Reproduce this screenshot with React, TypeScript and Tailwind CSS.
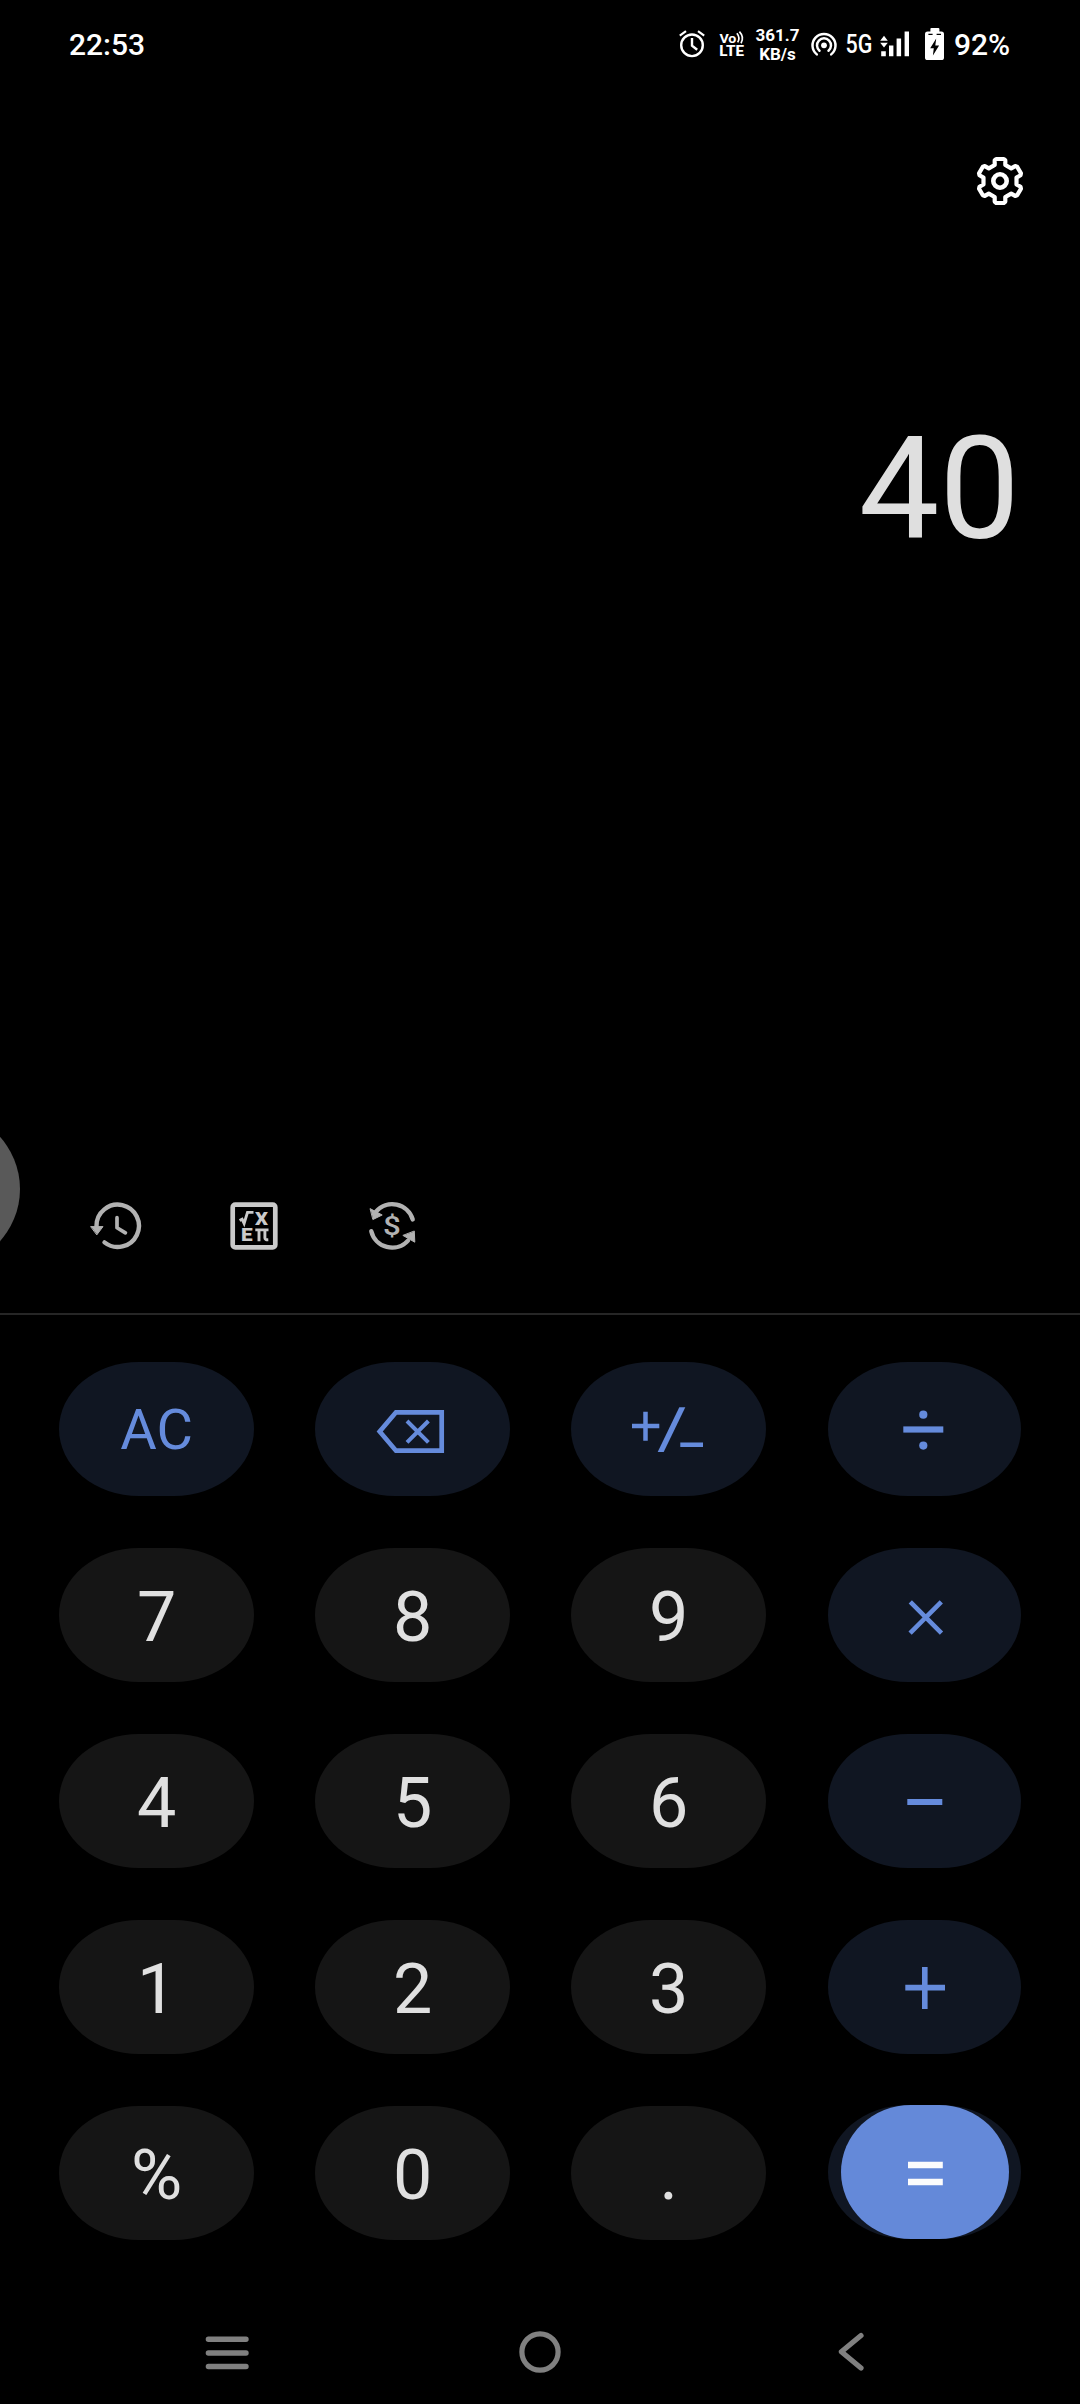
import type { ReactNode } from "react";

const BLUE = "#658bdc";

/* ---------- status bar ---------- */

function StatusBar() {
  return (
    <header className="flex h-[88px] items-start justify-between pl-[69px] pr-[70px] text-white">
      <span className="mt-[27px] text-[30px] leading-[35px] font-medium">22:53</span>
      <div className="flex h-full items-start">
        <svg className="h-[88px] w-[30px]" viewBox="678 0 30 88" fill="none" stroke="currentColor" strokeWidth="2.4">
          <circle cx="692" cy="45.3" r="10.8" />
          <path d="M679.8 35.6 686 31.2M698 31.2 704.2 35.6" strokeWidth="2.2" />
          <path d="M692 38v7.6l5.2 4.2" />
        </svg>
        <svg className="ml-[10px] h-[88px] w-[28px]" viewBox="718 0 28 88" fill="currentColor">
          <text x="719.4" y="42.7" fontSize="13" fontWeight="700" textLength="17" lengthAdjust="spacingAndGlyphs">Vo</text>
          <path d="M736.9 33.2q3.6 4.6 .8 9.2M739.4 31.6q5.2 5.6 1.6 11.6" fill="none" stroke="currentColor" strokeWidth="1.7" />
          <text x="719.3" y="56.4" fontSize="15" fontWeight="800" textLength="24.6" lengthAdjust="spacingAndGlyphs">LTE</text>
        </svg>
        <div className="ml-[8px] mt-[26px] flex w-[47px] flex-col items-center text-[17px] leading-[19px] font-bold">
          <span>361.7</span>
          <span>KB/s</span>
        </div>
        <svg className="ml-[9px] h-[88px] w-[28px]" viewBox="810 0 28 88" fill="none" stroke="currentColor" strokeWidth="2.5" strokeLinecap="round">
          <circle cx="824" cy="45.3" r="2.9" fill="currentColor" stroke="none" />
          <path d="M819.5 50.7A7 7 0 1 1 828.5 50.7" />
          <path d="M816.8 54.4A11.5 11.5 0 1 1 831.2 54.4" />
        </svg>
        <svg className="ml-[5px] h-[88px] w-[34px]" viewBox="843 0 34 88" fill="currentColor">
          <text x="845.6" y="53.3" fontSize="26" fontWeight="500" textLength="26.8" lengthAdjust="spacingAndGlyphs">5G</text>
        </svg>
        <svg className="ml-[2px] h-[88px] w-[32px]" viewBox="879 0 32 88" fill="currentColor">
          <path d="M880.2 40.7h7.6L884 35.8zM880.2 42.7h7.6L884 47.4z" />
          <path d="M881.2 51.3h4.6v5h-4.6zM889 45.6h4.4v10.7H889zM896.6 38.6h4.5v17.7h-4.5zM904.6 31.6h4.4v24.7h-4.4z" />
        </svg>
        <svg className="ml-[13px] h-[88px] w-[22px]" viewBox="924 0 22 88">
          <rect x="930.4" y="28" width="9" height="6" rx="1" fill="#fff" />
          <rect x="925" y="31.5" width="19" height="28.6" rx="2.6" fill="#fff" />
          <path d="M928.4 34.3h4.2M936.6 34.3h4.4" stroke="#000" strokeWidth="1.2" />
          <path d="M936.2 38.6l-6 9.6h3.6l-.9 7.4 6.2-10h-3.8z" fill="#000" />
        </svg>
        <span className="mt-[27px] ml-[8px] w-[56px] text-[30px] leading-[35px] font-medium whitespace-nowrap">92%</span>
      </div>
    </header>
  );
}

/* ---------- settings gear ---------- */

const toothPoints = [
  [-5.3, -16],
  [-5.3, -20.6],
  [-3.8, -22],
  [3.8, -22],
  [5.3, -20.6],
  [5.3, -16],
];
const gearPoints = Array.from({ length: 6 }, (_, k) => {
  const a = (k * Math.PI) / 3;
  return toothPoints.map(([x, y]) => {
    const px = x * Math.cos(a) - y * Math.sin(a);
    const py = x * Math.sin(a) + y * Math.cos(a);
    return `${px.toFixed(2)},${py.toFixed(2)}`;
  });
})
  .flat()
  .join(" ");

function GearIcon() {
  return (
    <svg className="size-[52px]" viewBox="-26 -26 52 52" fill="none" stroke="#fff" strokeLinejoin="round">
      <polygon points={gearPoints} strokeWidth="4.2" />
      <circle r="6.7" strokeWidth="4.6" />
    </svg>
  );
}

/* ---------- tool row ---------- */

function HistoryIcon() {
  return (
    <svg className="size-[56px]" viewBox="88 1198 56 56" fill="none" stroke="#b2b2b2" strokeWidth="4.4" strokeLinecap="round" strokeLinejoin="round">
      <path d="M104.5 1242.4A21.2 21.2 0 1 0 96.5 1226" />
      <path d="M117 1217.7v10l8.4 5.2" strokeWidth="3.7" />
      <path d="M91 1226.6h12l-6 8z" fill="#b2b2b2" strokeWidth="1" />
    </svg>
  );
}

function ScientificIcon() {
  return (
    <svg className="size-[56px]" viewBox="226 1198 56 56" fill="none" stroke="#cacaca">
      <rect x="232.7" y="1204.7" width="42.6" height="42.6" rx="2.6" strokeWidth="4.7" />
      <path d="M239.6 1220.6l2.5-1.4 2 4.2 3.4-11h6" strokeWidth="2.9" />
      <g fill="#cacaca" stroke="none" fontWeight="900">
        <text x="255.1" y="1225" fontSize="19" textLength="13" lengthAdjust="spacingAndGlyphs">X</text>
        <text x="241.1" y="1241.4" fontSize="18" textLength="11.6" lengthAdjust="spacingAndGlyphs">E</text>
      </g>
      <path d="M255.3 1229.9h13.2M259 1230v11.2M264.9 1230v8q0 2 3.4 1.8" strokeWidth="2.9" />
    </svg>
  );
}

function CurrencyIcon() {
  return (
    <svg className="size-[56px]" viewBox="364 1198 56 56" fill="none" stroke="#b2b2b2" strokeWidth="4.4" strokeLinecap="round">
      <path d="M412.7 1219.4A21.4 21.4 0 0 0 376 1211.6" />
      <path d="M371.3 1231.2A21.4 21.4 0 0 0 408 1240.6" />
      <path d="M370.4 1208.8l11.8 6.2-9 4.4zM414.3 1231.4l.5 10.8-11.6-6.6z" fill="#b2b2b2" strokeWidth="1" strokeLinejoin="round" />
      <text x="383.1" y="1234.7" fontSize="25" fontWeight="500" fill="#b2b2b2" stroke="none" textLength="17.8" lengthAdjust="spacingAndGlyphs">$</text>
    </svg>
  );
}

/* ---------- keypad ---------- */

function Key({ blue, last, children }: { blue?: boolean; last?: boolean; children: ReactNode }) {
  return (
    <button
      className={
        "flex h-[134px] items-center justify-center rounded-[80px/67px] text-[70px] leading-none " +
        (last ? "ml-[0.7px] w-[193.3px] " : "w-[195.3px] ") +
        (blue ? "bg-[#101622] text-[#658bdc]" : "bg-[#151515] pt-[3px] text-[#e0e0e0]")
      }
    >
      {children}
    </button>
  );
}

function BackspaceIcon() {
  return (
    <svg className="h-[134px] w-[195px]" viewBox="315 1362 195 134" fill="none" stroke={BLUE}>
      <path d="M379.7 1431.6 396 1412.3h45.7v38.4H396z" strokeWidth="4.7" />
      <path d="M407 1421l21.4 21.4M428.4 1421 407 1442.4" strokeWidth="4" />
    </svg>
  );
}

function SignIcon() {
  return (
    <svg className="h-[134px] w-[195px]" viewBox="571 1362 195 134" stroke={BLUE}>
      <path d="M632 1426h27.3M645.5 1411.7v29M680.3 1444.7H703" strokeWidth="4.5" />
      <path d="M679.3 1407.3h6L663.7 1452h-6z" fill={BLUE} stroke="none" />
    </svg>
  );
}

function DivideIcon() {
  return (
    <svg className="h-[134px] w-[193px]" viewBox="827.7 1362 193 134" fill={BLUE}>
      <rect x="903" y="1426.4" width="40" height="6.2" />
      <circle cx="923" cy="1414.7" r="4.1" />
      <circle cx="923" cy="1445.6" r="4.1" />
    </svg>
  );
}

function TimesIcon() {
  return (
    <svg className="-mt-[3px] h-[134px] w-[193px] translate-y-[1.5px]" viewBox="827.7 1548 193 134" stroke={BLUE} strokeWidth="4.6">
      <path d="M910 1601.3l31.2 31.4M941 1601.3l-31.2 31.4" />
    </svg>
  );
}

function MinusIcon() {
  return (
    <svg className="h-[134px] w-[193px]" viewBox="827.7 1734 193 134" stroke={BLUE} strokeWidth="6">
      <path d="M907 1802h35" />
    </svg>
  );
}

function PlusIcon() {
  return (
    <svg className="h-[134px] w-[193px]" viewBox="827.7 1920 193 134" stroke={BLUE} strokeWidth="5.6">
      <path d="M905 1987.6h39.7M924.5 1967v42" />
    </svg>
  );
}

function EqualsKey() {
  return (
    <button className="-mt-px ml-[0.7px] flex h-[134px] w-[193.3px] items-center justify-center rounded-[80px/67px] bg-[#101622]">
      <span className="ml-[1px] flex h-full w-[168px] items-center justify-center rounded-[70px/67px] bg-[#6489d9]">
        <svg className="h-[134px] w-[168px]" viewBox="841 2105 168 134" stroke="#fcfcfc" strokeWidth="6.4">
          <path d="M908 2165h34.8M908 2182h34.8" />
        </svg>
      </span>
    </button>
  );
}

function Keypad() {
  return (
    <section className="grid grid-cols-[195px_195px_195px_194px] gap-x-[61px] gap-y-[52px] pt-[47px] pl-[59px]">
      <Key blue>
        <span className="pt-[1px] text-[56px] leading-none">AC</span>
      </Key>
      <Key blue><BackspaceIcon /></Key>
      <Key blue><SignIcon /></Key>
      <Key blue last><DivideIcon /></Key>
      <Key>7</Key>
      <Key>8</Key>
      <Key>9</Key>
      <Key blue last><TimesIcon /></Key>
      <Key>4</Key>
      <Key>5</Key>
      <Key>6</Key>
      <Key blue last><MinusIcon /></Key>
      <Key>1</Key>
      <Key>2</Key>
      <Key>3</Key>
      <Key blue last><PlusIcon /></Key>
      <Key>%</Key>
      <Key>0</Key>
      <Key>.</Key>
      <EqualsKey />
    </section>
  );
}

/* ---------- navigation bar ---------- */

function NavBar() {
  return (
    <nav className="mt-auto flex h-[104px] items-center justify-between pr-[204px] pl-[203px]">
      <svg className="size-[48px]" viewBox="203.5 2328 48 48" stroke="#808080" strokeWidth="5.4" strokeLinecap="round">
        <path d="M208.9 2339.2h37.6M208.9 2353h37.6M208.9 2366.5h37.6" />
      </svg>
      <svg className="size-[48px]" viewBox="516 2328 48 48" fill="none" stroke="#808080" strokeWidth="5.2">
        <circle cx="540" cy="2352" r="18.1" />
      </svg>
      <svg className="size-[48px]" viewBox="828 2328 48 48" fill="none" stroke="#808080" strokeWidth="5.2" strokeLinecap="round" strokeLinejoin="round">
        <path d="M861 2335.6 841.4 2351.8 861 2368" />
      </svg>
    </nav>
  );
}

export default function App() {
  return (
    <div className="relative flex h-[2404px] w-[1080px] flex-col overflow-hidden bg-black font-['Roboto',sans-serif]">
      <StatusBar />
      <div className="flex h-[187px] justify-end pt-[67px] pr-[54px]">
        <GearIcon />
      </div>
      <div className="flex h-[901px] items-start justify-end pt-[130px] pr-[60px]">
        <output className="text-[143.5px] leading-[168px] text-[#dfdfdf]">40</output>
      </div>
      <div className="flex h-[137px] gap-[82px] pt-[22px] pl-[88px]">
        <HistoryIcon />
        <ScientificIcon />
        <CurrencyIcon />
      </div>
      <div className="h-[2px] shrink-0 bg-[#262626]" />
      <Keypad />
      <NavBar />
      {/* floating edge handle, mostly off-screen */}
      <div className="absolute top-[1111px] left-[-136px] size-[156px] rounded-full bg-[#595959]" />
    </div>
  );
}
